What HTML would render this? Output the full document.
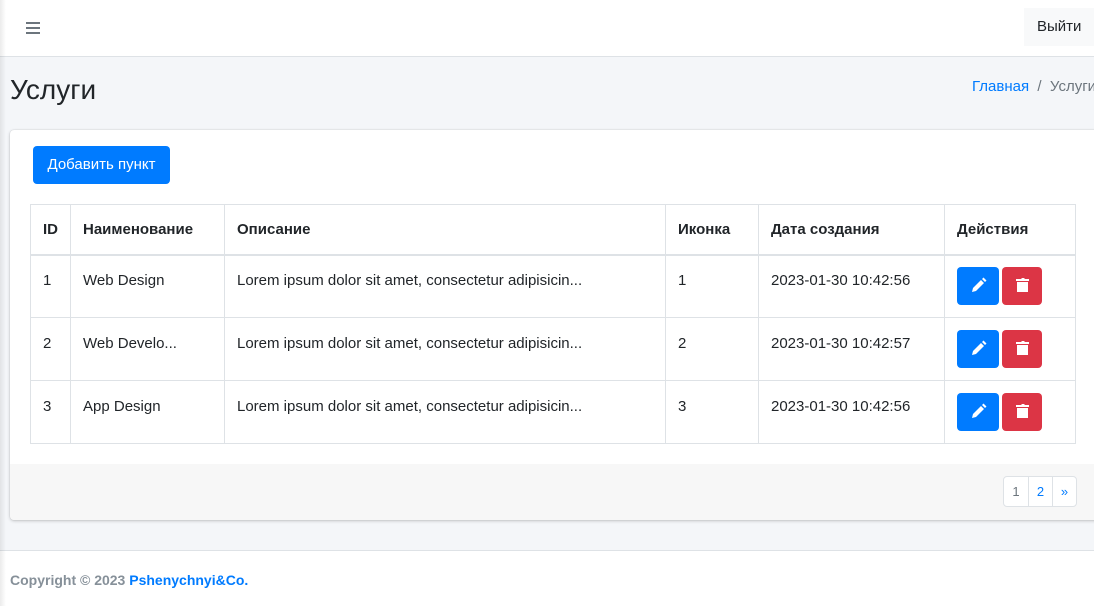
<!DOCTYPE html>
<html><head><meta charset="utf-8"><style>
*{box-sizing:border-box;margin:0;padding:0}
body{width:1094px;height:606px;overflow:hidden;background:#f4f6f9;font-family:"Liberation Sans","Noto Sans CJK SC",sans-serif;color:#212529;font-size:15px;position:relative}
.nav{position:absolute;left:0;top:0;width:1094px;height:57px;background:#fff;border-bottom:1px solid #dee2e6}
.ham{position:absolute;left:26px;top:22px;width:14px}
.ham i{display:block;height:2px;background:#6c757d;margin-bottom:3px}
.out{position:absolute;left:1024px;top:8px;width:80px;height:38px;background:#f8f9fa;line-height:38px;padding-left:13px;font-size:15px}
h1{position:absolute;left:10px;top:74px;font-size:28px;font-weight:400}
.bc{position:absolute;left:972px;top:78px;font-size:15px;color:#6c757d;white-space:nowrap}
.bc a{color:#007bff}
.card{position:absolute;left:10px;top:130px;width:1100px;height:390px;background:#fff;border-radius:4px;box-shadow:0 0 1px rgba(0,0,0,.2),0 1px 3px rgba(0,0,0,.2)}
.btn{position:absolute;left:23px;top:16px;width:137px;height:38px;background:#007bff;color:#fff;border-radius:4px;line-height:38px;text-align:center;font-size:15px}
table{position:absolute;left:20px;top:74px;border-collapse:collapse;font-size:15px}
td,th{border:1px solid #dee2e6;padding:0 12px;text-align:left;white-space:nowrap}
th{height:50px;border-bottom:2px solid #dee2e6;font-weight:700}
td{height:63px;padding-bottom:12px}
td.a{padding-bottom:0}
.e,.d{display:inline-block;width:42px;height:38px;border-radius:4px;vertical-align:middle;position:relative}
.e{background:#007bff;margin-right:3px}.d{background:#dc3545;width:40px}
.foot{position:absolute;left:0;top:334px;width:1100px;height:56px;background:#f7f7f7;border-radius:0 0 4px 4px}
.pg{position:absolute;left:993px;top:12px;display:flex;border:1px solid #dee2e6;border-radius:4px;background:#fff;height:31px}
.pg span{width:24px;line-height:29px;text-align:center;font-size:13px;color:#007bff;border-left:1px solid #dee2e6}
.pg span:first-child{border-left:0;color:#6c757d}
.ft{position:absolute;left:0;top:550px;width:1094px;height:56px;background:#fff;border-top:1px solid #dee2e6;padding:21px 10px;font-size:14px;font-weight:700;color:#869099}
.ft a{color:#007bff}
.sh{position:absolute;left:0;top:0;width:6px;height:606px;background:linear-gradient(90deg,rgba(0,0,0,.08),rgba(0,0,0,0))}
</style></head><body>
<div class="nav"><div class="ham"><i></i><i></i><i></i></div><div class="out">Выйти</div></div>
<h1>Услуги</h1>
<div class="bc"><a>Главная</a> &nbsp;/&nbsp; Услуги</div>
<div class="card">
<div class="btn">Добавить пункт</div>
<table>
<tr><th style="width:40px">ID</th><th style="width:154px">Наименование</th><th style="width:441px">Описание</th><th style="width:93px">Иконка</th><th style="width:186px">Дата создания</th><th style="width:131px">Действия</th></tr>
<tr><td>1</td><td>Web Design</td><td>Lorem ipsum dolor sit amet, consectetur adipisicin...</td><td>1</td><td>2023-01-30 10:42:56</td><td class="a"><span class="e"><svg width="42" height="38"><path d="M15 25l1-4 8-8 3 3-8 8z M25 12l1.5-1.5 3 3L28 15z" fill="#fff"/></svg></span><span class="d"><svg width="40" height="38"><path d="M14 12h5l1-1h2l1 1h4v2H14z M15 15h11v10H15z" fill="#fff"/></svg></span></td></tr>
<tr><td>2</td><td>Web Develo...</td><td>Lorem ipsum dolor sit amet, consectetur adipisicin...</td><td>2</td><td>2023-01-30 10:42:57</td><td class="a"><span class="e"><svg width="42" height="38"><path d="M15 25l1-4 8-8 3 3-8 8z M25 12l1.5-1.5 3 3L28 15z" fill="#fff"/></svg></span><span class="d"><svg width="40" height="38"><path d="M14 12h5l1-1h2l1 1h4v2H14z M15 15h11v10H15z" fill="#fff"/></svg></span></td></tr>
<tr><td>3</td><td>App Design</td><td>Lorem ipsum dolor sit amet, consectetur adipisicin...</td><td>3</td><td>2023-01-30 10:42:56</td><td class="a"><span class="e"><svg width="42" height="38"><path d="M15 25l1-4 8-8 3 3-8 8z M25 12l1.5-1.5 3 3L28 15z" fill="#fff"/></svg></span><span class="d"><svg width="40" height="38"><path d="M14 12h5l1-1h2l1 1h4v2H14z M15 15h11v10H15z" fill="#fff"/></svg></span></td></tr>
</table>
<div class="foot"><div class="pg"><span>1</span><span>2</span><span>»</span></div></div>
</div>
<div class="ft">Copyright © 2023 <a>Pshenychnyi&amp;Co.</a></div>
<div class="sh"></div>
</body></html>
